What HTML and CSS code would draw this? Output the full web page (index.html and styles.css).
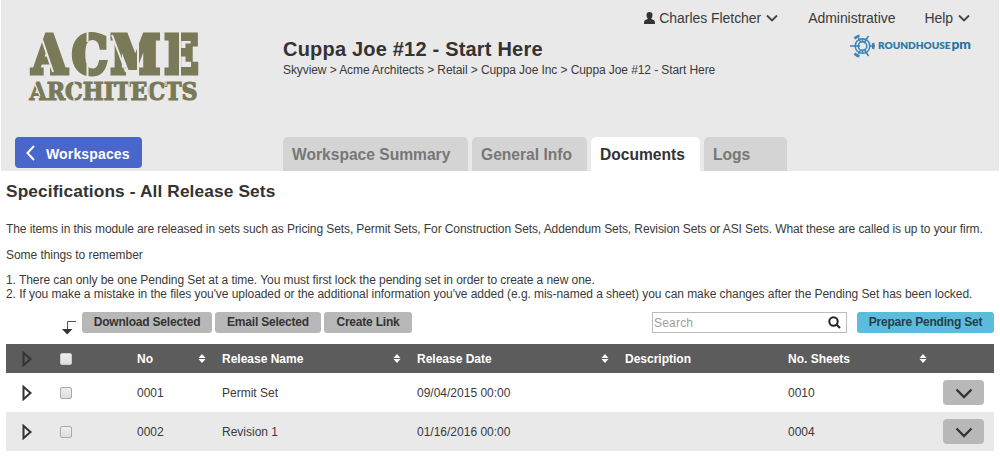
FILE: index.html
```html
<!DOCTYPE html>
<html lang="en">
<head>
    <meta charset="UTF-8">
    <meta name="viewport" content="width=device-width, initial-scale=1.0">
    <title>Specifications - All Release Sets</title>
    <link rel="stylesheet" href="styles.css">
</head>
<body>
    <header>
        <div class="side">
            <svg class="logo" width="180" height="90" viewBox="0 0 180 90">
                <g class="logo-text">
                    <text class="acme" transform="scale(.84 1)" x="8.500 56 102 166" y="46.500">ACME</text>
                    <text class="architects" x="4.500" y="73.500" textLength="168" lengthAdjust="spacingAndGlyphs">ARCHITECTS</text>
                </g>
                <!-- stencil cuts -->
                <g class="cuts">
                    <path d="M15.500 9L28 46M62.500 3V16M62.500 38V52M87 9L101 46M113 10V51M155 3V52"/>
                    <path class="thin" d="M10 58L15 70M49 54V60M49 69V76M104 54V75M141 54V60M141 69V76M124 54V75"/>
                </g>
            </svg>
            <a class="workspaces" href="#">
                <svg width="10" height="16" viewBox="0 0 10 16"><path d="M8 1L1.500 8 8 15"/></svg>
                Workspaces
            </a>
        </div>

        <div class="main-head">
            <div class="user-nav">
                <a class="user" href="#">
                    <svg class="person" width="11" height="12" viewBox="0 0 11 12"><path d="M5.500 0C3.500 0 2.500 1.300 2.500 3 2.500 4.800 3.200 5.900 3.700 6.400V7L1.300 8C.3 8.500 0 9.500 0 12H11C11 9.500 10.700 8.500 9.700 8L7.300 7V6.400C7.800 5.900 8.500 4.800 8.500 3 8.500 1.300 7.500 0 5.500 0Z"/></svg>
                    <span>Charles Fletcher</span>
                    <svg class="chevron" width="12" height="8" viewBox="0 0 12 8"><path d="M1 1.500L6 6.500 11 1.500"/></svg>
                </a>
                <a class="admin" href="#">Administrative</a>
                <a class="help" href="#">
                    <span>Help</span>
                    <svg class="chevron" width="12" height="8" viewBox="0 0 12 8"><path d="M1 1.500L6 6.500 11 1.500"/></svg>
                </a>
            </div>
            <div class="title-row">
                <div class="title">
                    <h1>Cuppa Joe #12 - Start Here</h1>
                    <p class="breadcrumb">Skyview &gt; Acme Architects &gt; Retail &gt; Cuppa Joe Inc &gt; Cuppa Joe #12 - Start Here</p>
                </div>
                <svg class="brand" width="122" height="24" viewBox="0 0 122 24">
                    <g class="wheel">
                        <circle cx="12.500" cy="12" r="7.300"/>
                        <circle cx="12.500" cy="12" r="4.300"/>
                        <path class="arc" d="M4.500 4.500A10 10 0 0 1 9.500 1.700M4.500 19.500A10 10 0 0 0 9.500 22.300M23 9A10 10 0 0 1 23 15"/>
                        <path d="M0 12H10M8.500 4L10.500 8M18.500 2L14 9M8.500 20L10.500 16M18.500 22L14 15M19 12H25M12.500 5V8M12.500 16V19"/>
                    </g>
                    <text class="roundhouse" x="28" y="15" textLength="72.500" lengthAdjust="spacingAndGlyphs">ROUNDHOUSE</text>
                    <text class="pm" x="101.500" y="15" textLength="19.500" lengthAdjust="spacingAndGlyphs">pm</text>
                </svg>
            </div>
            <nav>
                <ul>
                    <li><a href="#">Workspace Summary</a></li>
                    <li><a href="#">General Info</a></li>
                    <li class="active"><a href="#">Documents</a></li>
                    <li><a href="#">Logs</a></li>
                </ul>
            </nav>
        </div>
    </header>

    <main>
        <h2>Specifications - All Release Sets</h2>
        <div class="intro">
            <p class="lead">The items in this module are released in sets such as Pricing Sets, Permit Sets, For Construction Sets, Addendum Sets, Revision Sets or ASI Sets. What these are called is up to your firm.</p>
            <p>Some things to remember</p>
            <p>1. There can only be one Pending Set at a time. You must first lock the pending set in order to create a new one.<br>2. If you make a mistake in the files you've uploaded or the additional information you've added (e.g. mis-named a sheet) you can make changes after the Pending Set has been locked.</p>
        </div>

        <div class="toolbar">
            <svg class="down-arrow" width="16" height="16" viewBox="0 0 16 16"><path class="line" d="M15 1.500H6.500V10"/><path d="M1 9H11.500L6.200 14.500Z"/></svg>
            <button class="download">Download Selected</button>
            <button class="email">Email Selected</button>
            <button class="link">Create Link</button>
            <div class="search">
                <span>Search</span>
                <svg width="13" height="13" viewBox="0 0 13 13"><circle cx="5.500" cy="5.500" r="4.200"/><path d="M8.500 8.500L12 12"/></svg>
            </div>
            <button class="prepare">Prepare Pending Set</button>
        </div>

        <table>
            <colgroup>
                <col class="c-expand"><col class="c-check"><col class="c-no"><col class="c-name"><col class="c-date"><col class="c-desc"><col class="c-sheets"><col class="c-action">
            </colgroup>
            <tr>
                <th class="expand"><svg width="10" height="16" viewBox="0 0 10 16"><path d="M1.500 1.800V14.200L8.500 8Z"/></svg></th>
                <th class="check"><i></i></th>
                <th><div>No <svg class="sort" width="8" height="9" viewBox="0 0 8 9"><path d="M.5 4L4 0 7.500 4ZM.5 5L4 9 7.500 5Z"/></svg></div></th>
                <th><div>Release Name <svg class="sort" width="8" height="9" viewBox="0 0 8 9"><path d="M.5 4L4 0 7.500 4ZM.5 5L4 9 7.500 5Z"/></svg></div></th>
                <th><div>Release Date <svg class="sort" width="8" height="9" viewBox="0 0 8 9"><path d="M.5 4L4 0 7.500 4ZM.5 5L4 9 7.500 5Z"/></svg></div></th>
                <th>Description</th>
                <th><div>No. Sheets <svg class="sort" width="8" height="9" viewBox="0 0 8 9"><path d="M.5 4L4 0 7.500 4ZM.5 5L4 9 7.500 5Z"/></svg></div></th>
                <th></th>
            </tr>
            <tr>
                <td class="expand"><svg width="10" height="16" viewBox="0 0 10 16"><path d="M1.500 1.800V14.200L8.500 8Z"/></svg></td>
                <td class="check"><i></i></td>
                <td>0001</td>
                <td>Permit Set</td>
                <td>09/04/2015 00:00</td>
                <td></td>
                <td>0010</td>
                <td><button class="more"><svg width="18" height="11" viewBox="0 0 18 11"><path d="M1.500 1.500L9 9 16.500 1.500"/></svg></button></td>
            </tr>
            <tr>
                <td class="expand"><svg width="10" height="16" viewBox="0 0 10 16"><path d="M1.500 1.800V14.200L8.500 8Z"/></svg></td>
                <td class="check"><i></i></td>
                <td>0002</td>
                <td>Revision 1</td>
                <td>01/16/2016 00:00</td>
                <td></td>
                <td>0004</td>
                <td><button class="more"><svg width="18" height="11" viewBox="0 0 18 11"><path d="M1.500 1.500L9 9 16.500 1.500"/></svg></button></td>
            </tr>
        </table>
    </main>
</body>
</html>
```

FILE: styles.css
```css
* {
    margin: 0;
    padding: 0;
    box-sizing: border-box;
}

body {
    font-family: "Liberation Sans", Arial, sans-serif;
    font-size: 12px;
    line-height: 14px;
    color: #3a3a3a;
    background-color: #fff;
}

a {
    color: inherit;
    text-decoration: none;
}

svg {
    display: block;
    flex: none;
}

header {
    display: flex;
    height: 171px;
    margin: 0 1px;
    background-color: #e9e9e9;
}

.side {
    width: 282px;
    padding: 26px 0 0 14px;
}

.logo {
    margin-left: 10px;
}

.logo-text {
    font-family: "DejaVu Serif", serif;
    font-weight: bold;
    fill: #7a7958;
    stroke: #7a7958;
}

.acme {
    font-size: 53px;
    stroke-width: 5;
}

.architects {
    font-size: 24.5px;
    stroke-width: 1.2;
}

.cuts {
    fill: none;
    stroke: #e9e9e9;
    stroke-width: 2;
}

.cuts .thin {
    stroke-width: 1.2;
}

.workspaces {
    display: flex;
    align-items: center;
    gap: 10px;
    width: 127px;
    height: 31px;
    margin-top: 21px;
    padding: 2px 0 0 11px;
    border-radius: 4px;
    background-color: #4966cb;
    color: #fff;
    font-size: 14px;
    font-weight: bold;
    letter-spacing: .15px;
}

.workspaces svg {
    margin-top: -2px;
}

.workspaces svg path {
    fill: none;
    stroke: #fff;
    stroke-width: 2;
}

.main-head {
    display: flex;
    flex-direction: column;
    flex: 1;
}

.user-nav {
    display: flex;
    justify-content: flex-end;
    height: 37px;
    padding: 10px 29px 0 0;
    font-size: 14px;
    line-height: 16px;
    letter-spacing: -.05px;
}

.user,
.help {
    display: flex;
    align-items: center;
}

.user-nav a {
    height: 16px;
}

.person {
    margin-right: 4px;
    fill: #333;
}

.chevron {
    margin-left: 5px;
    fill: none;
    stroke: #444;
    stroke-width: 1.8;
}

.admin {
    margin: 0 29px 0 30px;
}

.title-row {
    display: flex;
    justify-content: space-between;
    height: 100px;
    padding-right: 27px;
}

h1 {
    color: #333;
    font-size: 20px;
    line-height: 24px;
    letter-spacing: .2px;
}

.breadcrumb {
    margin-top: 2px;
    letter-spacing: -.085px;
}

.brand {
    margin-top: -3px;
}

.wheel {
    fill: none;
    stroke: #3a83b4;
    stroke-width: 1.5;
}

.wheel .arc {
    stroke-width: 2.6;
}

.roundhouse {
    font-family: Lato, sans-serif;
    font-size: 9.5px;
    font-weight: 800;
    fill: #2b79a7;
}

.pm {
    font-family: Lato, sans-serif;
    font-size: 14px;
    font-weight: 900;
    fill: #226f9f;
}

nav ul {
    display: flex;
    gap: 4px;
    list-style: none;
}

nav li {
    height: 34px;
    padding: 1px 14px 0 9px;
    border-radius: 5px 5px 0 0;
    background-color: #d4d4d4;
    color: #777;
    font-size: 15.6px;
    font-weight: bold;
    line-height: 34px;
}

nav li:nth-child(1) {
    width: 185px;
}

nav li:nth-child(2) {
    width: 115px;
}

nav li:nth-child(3) {
    width: 109px;
}

nav li:nth-child(4) {
    width: 83px;
}

nav li.active {
    background-color: #fff;
    color: #333;
}

main {
    padding: 10px 6px 0;
}

h2 {
    color: #333;
    font-size: 17.3px;
    line-height: 20px;
    letter-spacing: .12px;
}

.intro {
    height: 111px;
    padding-top: 22px;
    line-height: 13.5px;
    letter-spacing: -.06px;
    white-space: nowrap;
}

.intro p {
    margin-bottom: 12px;
}

.intro .lead {
    letter-spacing: -.095px;
}

.toolbar {
    display: flex;
    height: 32px;
}

.down-arrow {
    margin: 8px 5px 0 55px;
    fill: #333;
}

.down-arrow .line {
    fill: none;
    stroke: #555;
}

button {
    height: 21px;
    padding-bottom: 2px;
    border: none;
    border-radius: 3px;
    background-color: #b8b8b8;
    color: #333;
    font: bold 12px "Liberation Sans", Arial, sans-serif;
    letter-spacing: -.2px;
}

.toolbar button {
    margin-right: 3px;
}

.download {
    width: 130px;
}

.email {
    width: 106px;
}

.link {
    width: 88px;
}

.search {
    display: flex;
    align-items: center;
    justify-content: space-between;
    width: 195px;
    height: 21px;
    margin: 0 10px 0 auto;
    padding: 0 5px 0 1px;
    border: 1px solid #bbb;
    color: #a0a0a0;
    letter-spacing: .2px;
}

.search svg {
    fill: none;
    stroke: #222;
    stroke-width: 2;
}

.toolbar .prepare {
    width: 137px;
    margin-right: 0;
    background-color: #5bbddb;
    color: #22404c;
}

table {
    width: 988px;
    table-layout: fixed;
    border-collapse: collapse;
}

.c-expand {
    width: 41px;
}

.c-check {
    width: 80px;
}

.c-no {
    width: 85px;
}

.c-name {
    width: 195px;
}

.c-date {
    width: 208px;
}

.c-desc {
    width: 163px;
}

.c-sheets {
    width: 155px;
}

.c-action {
    width: 61px;
}

tr {
    height: 39px;
}

tr:first-child {
    height: 29px;
    background-color: #5c5c5c;
    color: #fff;
}

tr:nth-child(3) {
    background-color: #e9e9e9;
}

th,
td {
    padding-left: 10px;
    text-align: left;
    vertical-align: middle;
}

th div {
    display: flex;
    align-items: center;
    justify-content: space-between;
    padding-right: 6px;
}

.sort {
    fill: #fff;
}

.expand {
    padding-left: 16px;
}

.expand svg {
    fill: none;
    stroke: #333;
    stroke-width: 2;
}

.check {
    padding-left: 13px;
}

.check i {
    display: block;
    width: 12px;
    height: 12px;
    border: 1px solid #aaa;
    border-radius: 2px;
    background: linear-gradient(#eee, #ddd);
}

th.check i {
    border-color: #ccc;
}

.more {
    display: flex;
    align-items: center;
    justify-content: center;
    width: 41px;
    height: 25px;
    padding: 1px 0 0;
    border-radius: 4px;
}

.more svg {
    fill: none;
    stroke: #333;
    stroke-width: 2.3;
}
```
